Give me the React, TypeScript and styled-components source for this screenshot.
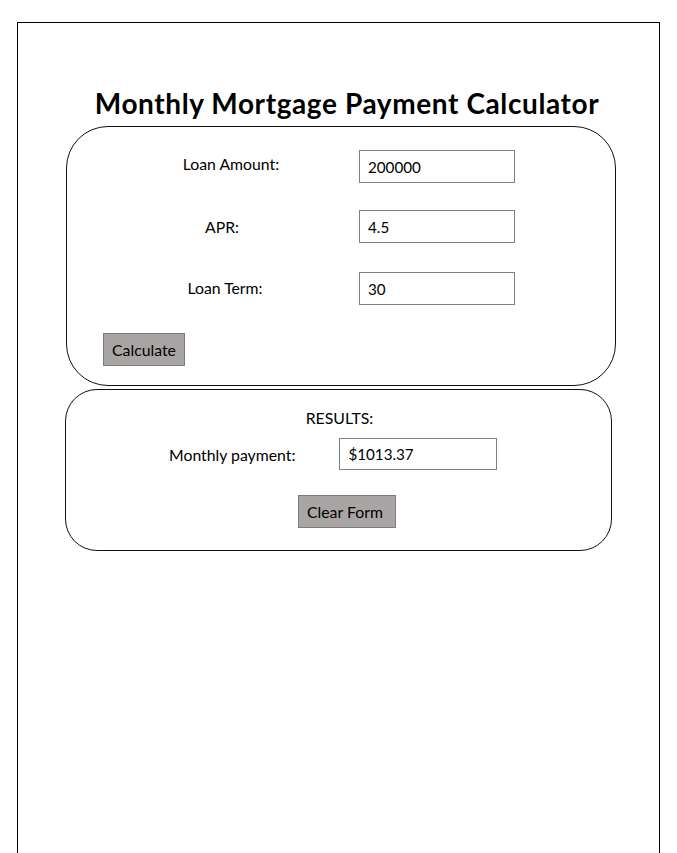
import React from "react";
import styled, { createGlobalStyle } from "styled-components";

const Global = createGlobalStyle`
  html, body { margin: 0; padding: 0; background: #ffffff; }
  body { font-family: Lato, "Open Sans", Arial, sans-serif; color: #000; }
  * { box-sizing: border-box; }
`;

const Frame = styled.div`
  margin: 22px 0 0 17px;
  width: 643px;
  min-height: 850px;
  border: 1px solid #000;
  border-bottom: none;
  padding: 63px 0 0 48px;
  display: flex;
  flex-direction: column;
`;

const Title = styled.h1`
  margin: 0 0 6px 0;
  width: 550px;
  padding-left: 12px;
  text-align: center;
  font-family: Lato, sans-serif;
  font-weight: 700;
  font-size: 28px;
  line-height: normal;
  letter-spacing: 0.6px;
  white-space: nowrap;
`;

const Panel = styled.section<{ $w: number; $h: number; $r: number; $shift?: number; $top?: number }>`
  width: ${(p) => p.$w}px;
  height: ${(p) => p.$h}px;
  margin-left: ${(p) => p.$shift ?? 0}px;
  margin-top: ${(p) => p.$top ?? 0}px;
  border: 1.4px solid #111;
  border-radius: ${(p) => p.$r}px;
  display: flex;
  flex-direction: column;
`;

const Fields = styled.div`
  display: flex;
  flex-direction: column;
  padding: 23px 0 0 60px;
`;

const FieldRow = styled.div<{ $gap: number }>`
  display: grid;
  grid-template-columns: 200px 156px;
  column-gap: 32px;
  align-items: center;
  margin-top: ${(p) => p.$gap}px;
`;

const Label = styled.label<{ $nudge?: number; $lift?: number }>`
  font-size: 15.8px;
  text-align: center;
  white-space: nowrap;
  padding-left: ${(p) => Math.max(0, p.$nudge ?? 0) * 2}px;
  padding-right: ${(p) => Math.max(0, -(p.$nudge ?? 0)) * 2}px;
  margin-top: ${(p) => -(p.$lift ?? 0)}px;
`;

const Field = styled.input<{ $w?: number; $h?: number }>`
  width: ${(p) => p.$w ?? 156}px;
  height: ${(p) => p.$h ?? 33}px;
  border: 1px solid #808080;
  border-radius: 0;
  padding: 0 0 0 8px;
  font-family: Lato, sans-serif;
  font-size: 15.2px;
  color: #000;
  background: #fff;
  outline: none;
`;

const Button = styled.button<{ $w: number }>`
  width: ${(p) => p.$w}px;
  height: 33px;
  background: #a9a5a5;
  border: 1px solid #7c7c7c;
  border-radius: 0;
  font-family: Lato, sans-serif;
  font-size: 15.8px;
  color: #000;
  padding: 0 0 0 8px;
  text-align: left;
  cursor: pointer;
`;

const CalcRow = styled.div`
  padding: 28px 0 0 36px;
`;

const ResultsHeading = styled.div`
  text-align: center;
  font-size: 15.8px;
  padding-top: 18px;
  padding-left: 2px;
`;

const ResultRow = styled.div`
  display: flex;
  align-items: center;
  gap: 44px;
  margin-top: 11px;
  padding-left: 103px;
`;

const ClearRow = styled.div`
  display: flex;
  padding-left: 232px;
  margin-top: 25px;
`;

export default function App() {
  return (
    <>
      <Global />
      <Frame>
        <Title>Monthly Mortgage Payment Calculator</Title>
        <Panel $w={550} $h={260} $r={42}>
          <Fields>
            <FieldRow $gap={0}>
              <Label $nudge={4} $lift={7}>Loan Amount:</Label>
              <Field defaultValue="200000" />
            </FieldRow>
            <FieldRow $gap={27}>
              <Label $nudge={-5}>APR:</Label>
              <Field defaultValue="4.5" />
            </FieldRow>
            <FieldRow $gap={29}>
              <Label $nudge={-2} $lift={2}>Loan Term:</Label>
              <Field defaultValue="30" />
            </FieldRow>
          </Fields>
          <CalcRow>
            <Button $w={82}>Calculate</Button>
          </CalcRow>
        </Panel>
        <Panel $w={547} $h={162} $r={32} $shift={-1} $top={3}>
          <ResultsHeading>RESULTS:</ResultsHeading>
          <ResultRow>
            <Label>Monthly payment:</Label>
            <Field defaultValue="$1013.37" $w={158} $h={32} />
          </ResultRow>
          <ClearRow>
            <Button $w={98}>Clear Form</Button>
          </ClearRow>
        </Panel>
      </Frame>
    </>
  );
}
